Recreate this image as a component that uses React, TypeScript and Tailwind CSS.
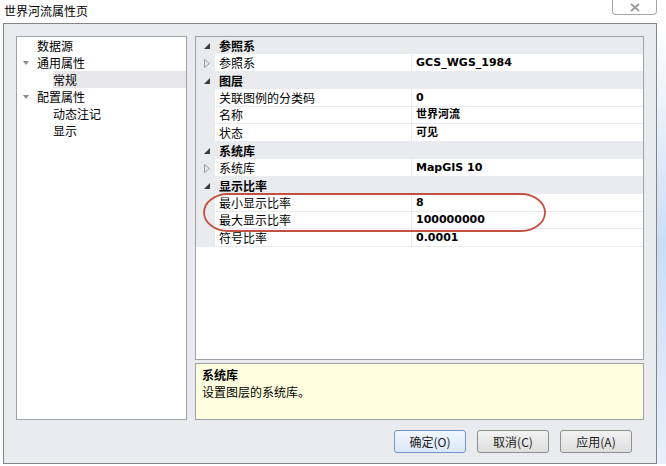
import React from 'react';

type Row =
    | { kind: 'cat'; text: string }
    | { kind: 'item'; label: string; value: string; expand?: boolean };

const rows: Row[] = [
    { kind: 'cat', text: '参照系' },
    { kind: 'item', label: '参照系', value: 'GCS_WGS_1984', expand: true },
    { kind: 'cat', text: '图层' },
    { kind: 'item', label: '关联图例的分类码', value: '0' },
    { kind: 'item', label: '名称', value: '世界河流' },
    { kind: 'item', label: '状态', value: '可见' },
    { kind: 'cat', text: '系统库' },
    { kind: 'item', label: '系统库', value: 'MapGIS 10', expand: true },
    { kind: 'cat', text: '显示比率' },
    { kind: 'item', label: '最小显示比率', value: '8' },
    { kind: 'item', label: '最大显示比率', value: '100000000' },
    { kind: 'item', label: '符号比率', value: '0.0001' },
];

const tree = [
    { text: '数据源', level: 0 },
    { text: '通用属性', level: 0, open: true },
    { text: '常规', level: 1, selected: true },
    { text: '配置属性', level: 0, open: true },
    { text: '动态注记', level: 1 },
    { text: '显示', level: 1 },
];

const cjk = { fontFamily: '"Noto Sans CJK SC", sans-serif' };
const valueFont = { fontFamily: '"DejaVu Sans", "Noto Sans CJK SC", sans-serif' };

// small filled triangle used for expanded categories
const CatArrow = () => (
    <svg width="6" height="6" viewBox="0 0 6 6">
        <path d="M6 0 L6 6 L0 6 Z" fill="#3c3c3c" />
    </svg>
);

const ItemArrow = () => (
    <svg width="6" height="9" viewBox="0 0 6 9">
        <path d="M0.5 0.5 L5.5 4.5 L0.5 8.5 Z" fill="none" stroke="#9a9a9a" strokeWidth="1" />
    </svg>
);

const TreeArrow = () => (
    <svg width="6" height="4" viewBox="0 0 6 4">
        <path d="M0 0 L6 0 L3 4 Z" fill="#8a8a8a" />
    </svg>
);

const Button = ({ label, primary }: { label: string; primary?: boolean }) => (
    <button
        className={
            primary
                ? 'w-[72px] h-[23px] rounded-[3px] border border-[#6f96c8] bg-gradient-to-b from-[#f1f6fd] to-[#dce7f8] text-[12px] text-[#1a1a1a]'
                : 'w-[72px] h-[23px] rounded-[3px] border border-[#8e8f8f] bg-gradient-to-b from-[#f3f3f3] to-[#dedede] text-[12px] text-[#1a1a1a]'
        }
        style={cjk}
    >
        {label}
    </button>
);

export default function App() {
    return (
        <div className="relative w-[666px] h-[466px] overflow-hidden bg-white text-black" style={cjk}>
            {/* title bar */}
            <div className="flex h-[23px] items-start justify-between">
                <span className="pl-[4px] pt-[4px] text-[12px] leading-[14px]">世界河流属性页</span>
                <div className="mr-[9px] flex h-[15px] w-[45px] items-center justify-center rounded-b-[4px] border border-t-0 border-[#a6a6a6] bg-white">
                    <svg width="10" height="9" viewBox="0 0 10 9">
                        <path d="M1 1 L9 8 M9 1 L1 8" stroke="#9c9c9c" strokeWidth="2" />
                    </svg>
                </div>
            </div>

            <div className="flex">
                {/* dialog body */}
                <div className="ml-[3px] flex h-[441px] w-[654px] flex-col border border-[#858585] bg-[#eaebee] pl-[12px] pt-[12px]">
                    <div className="flex gap-[8px]">
                        {/* tree */}
                        <div className="h-[384px] w-[171px] border border-[#9ea1a8] bg-white">
                            {tree.map((t, i) => (
                                <div key={i} className="flex h-[17px] items-center">
                                    <div className="flex w-[20px] justify-end pr-[8px]">{t.open && <TreeArrow />}</div>
                                    <div
                                        className={
                                            t.selected
                                                ? 'ml-[16px] flex h-[17px] flex-1 items-center bg-[#e8e8ea] text-[12px] leading-[17px]'
                                                : t.level === 1
                                                  ? 'ml-[16px] text-[12px] leading-[17px]'
                                                  : 'text-[12px] leading-[17px]'
                                        }
                                    >
                                        {t.text}
                                    </div>
                                </div>
                            ))}
                        </div>

                        <div className="flex flex-col gap-[3px]">
                            {/* property grid */}
                            <div className="h-[324px] w-[449px] border border-[#9ea1a8] bg-white">
                                {rows.map((r, i) => {
                                    const h = i % 2 === 0 ? 'h-[17px]' : 'h-[18px]';
                                    const cell = i % 2 === 0 ? 'h-[16px] leading-[16px]' : 'h-[17px] leading-[17px]';
                                    return r.kind === 'cat' ? (
                                        <div key={i} className={`flex ${h} items-center bg-[#eaebee]`}>
                                            <div className="flex w-[19px] justify-center pl-[2px]">
                                                <CatArrow />
                                            </div>
                                            <span className="pl-[4px] text-[12px] font-bold">{r.text}</span>
                                        </div>
                                    ) : (
                                        <div key={i} className={`flex ${h} bg-[#eaebee]`}>
                                            <div className="flex w-[19px] items-center justify-center pl-[2px]">
                                                {r.expand && <ItemArrow />}
                                            </div>
                                            <div className={`${cell} w-[196px] bg-white pl-[4px] text-[12px]`}>{r.label}</div>
                                            <div className="w-px" />
                                            <div className={`${cell} flex-1 bg-white pl-[4px] text-[11px] font-bold`} style={valueFont}>
                                                {r.value}
                                            </div>
                                        </div>
                                    );
                                })}
                            </div>

                            {/* description */}
                            <div className="h-[57px] w-[449px] border border-[#9ea1a8] bg-[#ffffdf] px-[6px] pt-[2px] text-[12px] leading-[17px]">
                                <div className="font-bold">系统库</div>
                                <div>设置图层的系统库。</div>
                            </div>
                        </div>
                    </div>

                    <div className="mt-[10px] flex justify-end gap-[11px] pr-[24px]">
                        <Button label="确定(O)" primary />
                        <Button label="取消(C)" />
                        <Button label="应用(A)" />
                    </div>
                </div>
                <div className="h-[441px] flex-1 bg-gradient-to-b from-white via-[#c9def5] to-[#e7f0fb]" />
            </div>

            {/* red annotation ring */}
            <svg className="pointer-events-none absolute left-0 top-0" width="666" height="466">
                <rect x="204" y="194" width="341" height="37" rx="24" ry="18.5" fill="none" stroke="#c2513f" strokeWidth="1.8" />
            </svg>
        </div>
    );
}
